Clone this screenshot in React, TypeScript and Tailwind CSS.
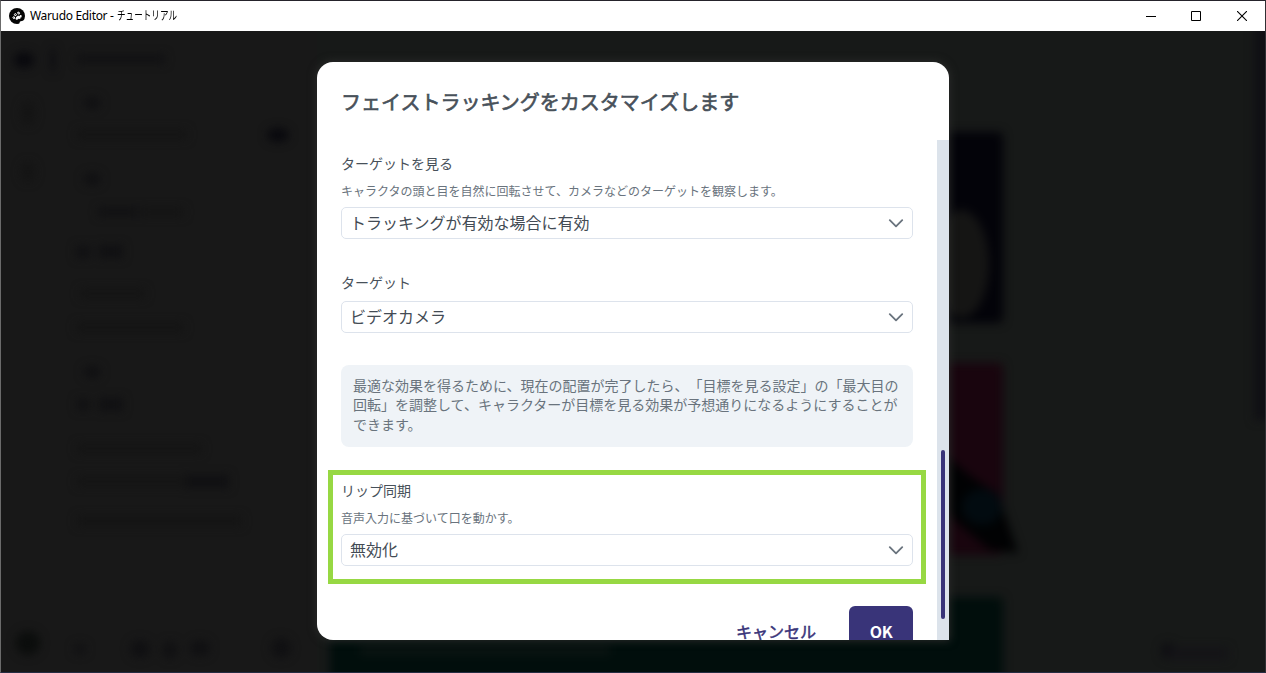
import type { ReactNode } from "react";

const jp = "font-['Noto_Sans_CJK_JP',sans-serif]";

function TitleBar() {
  return (
    <header className="flex h-[30px] shrink-0 items-center bg-white text-black">
      <svg className="ml-2 h-4 w-4 shrink-0" viewBox="0 0 16 16">
        <circle cx="8" cy="8" r="8" fill="#050505" />
        <g fill="none" stroke="#fff" strokeWidth="1" strokeLinejoin="round">
          <path d="M5.2 6.4 6.6 5.5l.9 1.4-1.4.9z" />
          <path d="m8.6 4.4 1.4-.3.7 1.6-1.4.4z" />
          <path d="m3.8 9.3 1.3-.6.7 1.6-1.3.3z" />
        </g>
        <path d="m7.2 8.9 1.9-1.5 1.3.8.7-1.3 1.5.4v2l-1.4.4.2 1.2-1.9-.2-1.6 1.4-1.4-1.1z" fill="#fff" />
        <path d="M10.2 16 11 13.6l4.6-1.4L13.5 16z" fill="#fff" />
      </svg>
      <h1 className="ml-[5px] flex items-center whitespace-nowrap font-['Noto_Sans','Noto_Sans_CJK_JP',sans-serif] text-[12px] leading-[16px]">
        <span className="w-[87px] tracking-[-0.33px]">Warudo Editor -</span>
        <span className="origin-left scale-x-[0.715]">チュートリアル</span>
      </h1>
      <div className="ml-auto flex h-full shrink-0">
        <span className="flex w-[45px] items-center justify-center">
          <svg width="10" height="10" viewBox="0 0 10 10" shapeRendering="crispEdges"><path d="M0 5h10v1H0z" /></svg>
        </span>
        <span className="flex w-[45px] items-center justify-center">
          <svg width="10" height="10" viewBox="0 0 10 10" fill="none" stroke="#000"><path d="M.5.5h9v9h-9z" /></svg>
        </span>
        <span className="flex w-[47px] items-center justify-center">
          <svg width="10" height="10" viewBox="0 0 10 10" fill="none" stroke="#000" strokeWidth="1.1"><path d="m0 0 10 10M10 0 0 10" /></svg>
        </span>
      </div>
    </header>
  );
}

/* Frosted app content behind the dialog; origin is the window's client area. */
function Backdrop() {
  return (
    <svg className="absolute inset-0 h-full w-full" viewBox="1 31 1264 641" preserveAspectRatio="none">
      <defs>
        <filter id="soft" filterUnits="userSpaceOnUse" x="-40" y="-10" width="1350" height="730" colorInterpolationFilters="sRGB">
          <feGaussianBlur stdDeviation="5" />
        </filter>
      </defs>
      <path d="M317 31h948v641H317z" fill="#171918" />
      <g filter="url(#soft)">
        <g fill="#08080d">
          <ellipse cx="24" cy="60" rx="10" ry="8" />
          <ellipse cx="53" cy="60" rx="2" ry="13" />
          <ellipse cx="278" cy="135" rx="11" ry="7" />
        </g>
        <g fill="#101012">
          <rect x="77" y="55" width="88" height="8" />
          <ellipse cx="92" cy="103" rx="9" ry="6" />
          <ellipse cx="92" cy="179" rx="9" ry="6" />
          <rect x="98" y="208" width="40" height="8" />
          <rect x="76" y="246" width="14" height="12" />
          <rect x="99" y="245" width="24" height="13" />
          <ellipse cx="92" cy="372" rx="9" ry="6" />
          <rect x="77" y="399" width="12" height="11" />
          <rect x="99" y="398" width="24" height="13" />
          <rect x="185" y="475" width="44" height="13" />
          <ellipse cx="80" cy="649" rx="6" ry="5" />
          <ellipse cx="140" cy="649" rx="10" ry="9" />
          <ellipse cx="170" cy="650" rx="7" ry="9" />
          <ellipse cx="200" cy="648" rx="10" ry="8" />
          <ellipse cx="281" cy="648" rx="10" ry="10" />
        </g>
        <g fill="#141414">
          <rect x="77" y="130" width="110" height="9" />
          <ellipse cx="28" cy="113" rx="7" ry="12" />
          <ellipse cx="28" cy="172" rx="7" ry="10" />
          <rect x="140" y="208" width="44" height="8" />
          <rect x="80" y="289" width="65" height="9" />
          <rect x="76" y="323" width="108" height="9" />
          <rect x="77" y="444" width="125" height="9" />
          <rect x="77" y="477" width="110" height="9" />
          <rect x="77" y="516" width="165" height="10" />
        </g>
        <ellipse cx="28" cy="643" rx="12" ry="12" fill="#0b0d0c" />
        <rect x="900" y="132" width="103" height="191" rx="5" fill="#030309" />
        <ellipse cx="961" cy="264" rx="28" ry="54" fill="#151514" />
        <rect x="900" y="363" width="103" height="192" rx="5" fill="#19050e" />
        <path d="m945 455 28 23 25 16 20 59-28-3-45-37z" fill="#010203" />
        <ellipse cx="982" cy="507" rx="20" ry="18" fill="#020b10" />
        <rect x="330" y="597" width="673" height="90" rx="5" fill="#010e0c" />
        <rect x="1254" y="0" width="40" height="420" fill="#101014" />
        <ellipse cx="1168" cy="651" rx="7" ry="8" fill="#0d0d11" />
        <rect x="1168" y="648" width="60" height="11" fill="#141317" />
        <rect x="360" y="645" width="250" height="10" fill="#0b1412" />
      </g>
    </svg>
  );
}

function Select({ children }: { children: ReactNode }) {
  return (
    <div className="flex h-8 items-center justify-between rounded-[5px] border border-[#dde3ec] pl-2 pr-2 text-[16px] leading-6 text-[#434b54]">
      <span className="pb-[2px]">{children}</span>
      <svg width="16" height="9" viewBox="0 0 16 9" fill="none" stroke="#69737d" strokeWidth="1.8" strokeLinecap="round" strokeLinejoin="round">
        <path d="m1.8 1.2 6.2 6.2 6.2-6.2" />
      </svg>
    </div>
  );
}

function Field({ label, hint, value }: { label: string; hint?: string; value: string }) {
  return (
    <section>
      <h3 className="h-5 text-[14px] leading-[18px]">{label}</h3>
      {hint && <p className="mt-2 text-[12px] leading-[18px] text-[#69737d]">{hint}</p>}
      <div className={hint ? "mt-[7px]" : "mt-2"}><Select>{value}</Select></div>
    </section>
  );
}

function Dialog() {
  return (
    <div className={`${jp} relative ml-[316px] mt-[31px] flex h-[578px] w-[632px] flex-col rounded-[16px] rounded-br-none bg-white text-[#48515a] shadow-[0_0_8px_1px_#2a2b2a]`}>
      <h2 className="h-[78px] shrink-0 px-6 pt-[26px] text-[20px] font-normal leading-7 [-webkit-text-stroke:0.65px_#48515a]">フェイストラッキングをカスタマイズします</h2>
      <div className="flex min-h-0 grow">
        <div className="flex min-w-0 grow flex-col overflow-hidden rounded-bl-[16px] pl-6 pr-6 pt-[14px]">
          <Field label="ターゲットを見る" hint="キャラクタの頭と目を自然に回転させて、カメラなどのターゲットを観察します。" value="トラッキングが有効な場合に有効" />
          <div className="mt-[34px]">
            <Field label="ターゲット" value="ビデオカメラ" />
          </div>
          <p className="mt-[32px] h-[82px] shrink-0 rounded-[8px] bg-[#eff3f7] px-3 py-[10.6px] text-[14px] leading-[19.6px] text-[#69737d] [text-spacing-trim:space-all]">
            最適な効果を得るために、現在の配置が完了したら、「目標を見る設定」の「最大目の回転」を調整して、キャラクターが目標を見る効果が予想通りになるようにすることができます。
          </p>
          <div className="-mx-[13px] mt-[23px] h-[114px] shrink-0 border-[5px] border-[#97d843] px-2 pt-[6px]">
            <Field label="リップ同期" hint="音声入力に基づいて口を動かす。" value="無効化" />
          </div>
          <div className="mt-[22px] flex shrink-0 justify-end">
            <button className="h-[49px] pl-8 pr-[33px] text-[16px] leading-6 text-[#393479] [-webkit-text-stroke:0.5px_#393479]">キャンセル</button>
            <button className="h-[49px] w-16 rounded-[6px] bg-[#393479] text-[16px] font-bold leading-6 tracking-[-0.5px] text-white">OK</button>
          </div>
        </div>
        <div className="flex w-3 shrink-0 flex-col items-center bg-[#dce3eb]">
          <div className="mt-[310px] h-[169px] w-1 rounded-[2px] bg-[#393479]" />
        </div>
      </div>
    </div>
  );
}

export default function App() {
  return (
    <div className="flex h-[673px] w-[1266px] flex-col overflow-hidden border border-b-[#252d43] border-l-[#6b6b6b] border-r-[#303033] border-t-[#25232b] bg-[#171717]">
      <TitleBar />
      <main className="relative min-h-0 grow overflow-hidden bg-[#181818]">
        <Backdrop />
        <Dialog />
      </main>
    </div>
  );
}
